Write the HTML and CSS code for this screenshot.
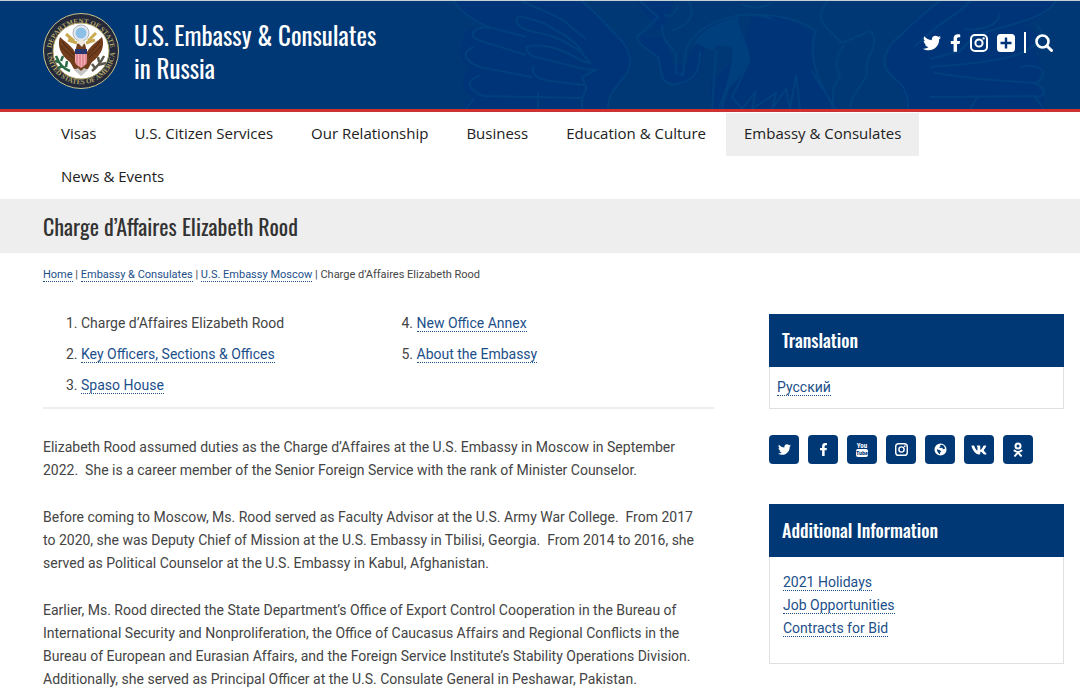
FILE: index.html
```html
<!DOCTYPE html>
<html lang="en">
<head>
  <meta charset="UTF-8">
  <meta name="viewport" content="width=device-width, initial-scale=1.0">
  <title>Charge d’Affaires Elizabeth Rood - U.S. Embassy &amp; Consulates in Russia</title>
  <link rel="stylesheet" href="styles.css">
</head>
<body>
  <!-- Shared icons -->
  <svg class="icon-defs" aria-hidden="true">
    <symbol id="icon-twitter" viewBox="0 0 512 512">
      <path d="M459.37 151.716c.325 4.548.325 9.097.325 13.645 0 138.72-105.583 298.558-298.558 298.558-59.452 0-114.68-17.219-161.137-47.106 8.447.974 16.568 1.299 25.34 1.299 49.055 0 94.213-16.568 130.274-44.832-46.132-.975-84.792-31.188-98.112-72.772 6.498.974 12.995 1.624 19.818 1.624 9.421 0 18.843-1.3 27.614-3.573-48.081-9.747-84.143-51.98-84.143-102.985v-1.299c13.969 7.797 30.214 12.67 47.431 13.319-28.264-18.843-46.781-51.005-46.781-87.391 0-19.492 5.197-37.36 14.294-52.954 51.655 63.675 129.3 105.258 216.365 109.807-1.624-7.797-2.599-15.918-2.599-24.04 0-57.828 46.782-104.934 104.934-104.934 30.213 0 57.502 12.67 76.67 33.137 23.715-4.548 46.456-13.32 66.599-25.34-7.798 24.366-24.366 44.833-46.132 57.827 21.117-2.273 41.584-8.122 60.426-16.243-14.292 20.791-32.161 39.308-52.628 54.253z"/>
    </symbol>
    <symbol id="icon-facebook" viewBox="0 0 320 512">
      <path d="M279.14 288l14.22-92.66h-88.91v-60.13c0-25.35 12.42-50.06 52.24-50.06h40.42V6.26S260.43 0 225.36 0c-73.22 0-121.08 44.38-121.08 124.72v70.62H22.89V288h81.39v224h100.17V288z"/>
    </symbol>
    <symbol id="icon-instagram" viewBox="0 0 18 18">
      <rect x="1" y="1" width="16" height="16" rx="4" fill="none" stroke="currentColor" stroke-width="2"/>
      <circle cx="9" cy="9" r="3.6" fill="none" stroke="currentColor" stroke-width="2"/>
      <circle cx="13.6" cy="4.4" r="1.2"/>
    </symbol>
    <symbol id="icon-plus" viewBox="0 0 18 18">
      <path fill-rule="evenodd" d="M3.500 0h11A3.500 3.500 0 0 1 18 3.500v11a3.500 3.500 0 0 1-3.500 3.500h-11A3.500 3.500 0 0 1 0 14.500v-11A3.500 3.500 0 0 1 3.500 0zM7.800 3.500v4.300H3.500v2.400h4.300v4.300h2.400v-4.300h4.300V7.800h-4.300V3.500z"/>
    </symbol>
    <symbol id="icon-search" viewBox="0 0 18 18">
      <circle cx="7.500" cy="7.500" r="6" fill="none" stroke="currentColor" stroke-width="2.600"/>
      <path d="M12 12l4.500 4.500" stroke="currentColor" stroke-width="3" stroke-linecap="round"/>
    </symbol>
    <symbol id="icon-youtube" viewBox="0 0 14 16">
      <text x="7" y="6" class="tube-text" fill="currentColor">You</text>
      <rect x="1" y="7" width="12" height="8" rx="2"/>
      <text x="7" y="13" class="tube-text tube-text-dark">Tube</text>
    </symbol>
    <symbol id="icon-globe" viewBox="0 0 14 14">
      <path fill-rule="evenodd" d="M7 0.500a6.500 6.500 0 1 1 0 13a6.500 6.500 0 0 1 0-13zM8 1.800L6.400 2.400 7.200 3.600 5.600 4.400 6.400 5.400 8.800 5 10 6.600 11.800 6.200 11.200 3.800 9.800 2.400zM3 6.600L3.600 8.800 5.400 11.600 6.400 12 6.600 10.200 7.800 8.800 5.800 7.600z"/>
    </symbol>
    <symbol id="icon-vk" viewBox="0 0 576 512">
      <path d="M545 117.7c3.700-12.500 0-21.700-17.800-21.700h-58.900c-15 0-21.900 7.900-25.600 16.700 0 0-30 73.100-72.400 120.500-13.700 13.700-20 18.100-27.500 18.100-3.700 0-9.400-4.400-9.400-16.900V117.700c0-15-4.200-21.700-16.600-21.700h-92.600c-9.400 0-15 7-15 13.500 0 14.200 21.200 17.500 23.400 57.500v86.800c0 19-3.400 22.500-10.900 22.500-20 0-68.600-73.400-97.400-157.400-5.800-16.300-11.500-22.900-26.600-22.900H38.800c-16.800 0-20.200 7.900-20.200 16.700 0 15.600 20 93.100 93.100 195.500C160.400 378.100 229 416 291.400 416c37.500 0 42.100-8.400 42.100-22.900 0-66.800-3.400-73.100 15.400-73.100 8.700 0 23.700 4.400 58.700 38.100 40 40 46.600 57.900 69 57.900h58.900c16.800 0 25.300-8.400 20.400-25-11.200-34.900-86.900-106.700-90.300-111.500-8.700-11.200-6.200-16.200 0-26.200.1-.1 72-101.300 79.400-135.600z"/>
    </symbol>
    <symbol id="icon-ok" viewBox="0 0 10 16">
      <g fill="none" stroke="currentColor" stroke-width="2" stroke-linecap="round">
        <circle cx="5" cy="4" r="2.500"/>
        <path d="M1.500 8.600c2 1.700 5 1.700 7 0M5 10.300L2 13.800M5 10.300L8 13.800"/>
      </g>
    </symbol>
  </svg>

  <header class="site-header">
    <svg class="header-art" viewBox="0 0 640 108" aria-hidden="true">
      <g class="art-feathers">
        <path d="M14 0C22 15 36 22 50 25C34 24 22 30 24 39C18 47 18 60 32 67C18 75 20 88 34 97C26 98 24 103 26 108H168C166 92 180 86 190 70C198 52 188 42 170 27C160 16 150 6 142 0Z"/>
        <path d="M500 0C480 10 462 28 450 48C438 70 466 80 467 108H602C610 94 596 82 594 82C608 70 600 62 594 48C602 34 596 24 582 26C600 18 612 6 616 0Z"/>
        <path d="M198 36L224 26L234 0H196L216 26L198 36L200 44L218 58L222 78L240 84L258 76L264 48L260 36L244 66L232 60L226 36Z"/>
        <path d="M312 16L300 52L270 84L272 108H400L374 70L372 30L340 14Z"/>
      </g>
      <path class="art-shade" d="M254 42C262 28 280 20 298 16C300 34 308 42 310 56C304 68 302 76 290 86C282 104 280 106 278 108C286 84 294 68 292 46L276 44L274 50Z"/>
      <g class="art-lines">
        <path d="M14 0C24 16 44 26 64 30L86 36M142 0C158 14 168 26 178 36C192 50 194 64 184 76C174 88 168 94 168 108"/>
        <path d="M79 15C72 22 80 29 100 32C120 36 132 44 142 52L150 62L142 60C120 46 100 42 86 46C88 58 100 56 120 62L144 68L156 69L142 76L146 87L142 98V108"/>
        <path d="M50 27C30 24 30 38 38 39L86 54M34 46C16 52 30 66 50 68L92 76M94 65C90 72 96 78 110 80L144 84M40 75C24 78 28 90 44 95L142 97M34 97L26 108M98 92L98 108"/>
        <path d="M79 15L104 22C112 28 130 34 142 50M82 0C100 10 122 15 130 25L146 38"/>
        <path d="M200 0L218 16L206 28L197 36C198 44 210 50 218 56C222 66 218 80 232 84C250 80 260 78 260 50M222 24C222 36 226 42 236 52V72L243 74L246 48C252 36 262 26 278 20C300 12 316 12 332 18M248 0C254 8 252 18 244 24L232 30M226 12C222 16 234 18 238 4"/>
        <path d="M276 50L272 108M296 50L282 108M310 58C304 72 298 84 292 96L302 108L316 90L312 108L336 92L332 108L346 88L350 108L356 74L360 108M302 3C314 9 324 7 332 2"/>
        <path d="M310 14C338 12 362 20 376 30C368 52 374 76 396 108M372 70C378 82 386 90 392 104M388 0C380 8 378 18 386 26L402 42L430 30M404 44C390 64 400 72 400 76C388 90 396 96 392 108M430 30C440 40 430 50 426 66C432 78 410 90 410 108"/>
        <path d="M500 0C480 14 466 30 452 42C438 62 444 70 460 82C468 92 468 100 468 108M530 0C520 14 500 20 490 32L474 46M616 0C608 12 592 18 574 23L536 34L520 50L490 58M560 12C558 26 540 30 524 28M596 24C612 36 590 50 570 56C544 62 520 64 490 66"/>
        <path d="M580 66C612 60 604 82 594 82L540 78L494 72M594 82C612 90 602 98 594 95L490 96M594 95L604 108M538 96C530 104 532 108 530 108"/>
      </g>
    </svg>

    <a class="brand" href="#">
      <svg class="seal" viewBox="0 0 76 76" role="img" aria-label="U.S. Department of State seal">
        <defs>
          <path id="ring-top" d="M9 48A30 30 0 1 1 67 48"/>
          <path id="ring-bottom" d="M5 29A34 34 0 1 0 71 29"/>
        </defs>
        <circle cx="38" cy="38" r="37.500" fill="#23293a" stroke="#c9c48c"/>
        <circle cx="38" cy="38" r="28" fill="#fff" stroke="#b9ac6e"/>
        <text class="seal-text"><textPath href="#ring-top" startOffset="50%">DEPARTMENT OF STATE</textPath></text>
        <text class="seal-text"><textPath href="#ring-bottom" startOffset="50%">UNITED STATES OF AMERICA</textPath></text>
        <path d="M23 21l8 7M53 20l-8 8M25 27l9 3M52 27l-9 3" stroke="#c9a94f" stroke-width="3"/>
        <circle cx="38" cy="20" r="8" fill="#e5e9ee" stroke="#a9b3bb"/>
        <circle cx="38" cy="20" r="5.500" fill="#8dc0e6"/>
        <path d="M17 24c-3 8 0 18 10 25l4 7 7 2 7-2 4-7c10-7 13-17 10-25-5 5-11 8-15 15l-2-8-4-2-4 2-2 8c-4-7-10-10-15-15z" fill="#713d1d"/>
        <path d="M19 28c3 6 8 8 12 14M18 33c4 6 8 7 12 12M57 28c-3 6-8 8-12 14M58 33c-4 6-8 7-12 12" stroke="#4d2612" fill="none"/>
        <path d="M34 29c2-3 6-3 8 0l-3 5z" fill="#eee9dd"/>
        <path d="M32 36h12v12c0 4-4 5-6 7-2-2-6-3-6-7z" fill="#f2b0b4"/>
        <path d="M34 41v11M37 41v13M40 41v13M43 41v10" stroke="#d0677a"/>
        <path d="M32 36h12v5H32z" fill="#27366f"/>
        <path d="M31 57l4-2 3 3 3-3 4 2-7 6z" fill="#c6c6c6"/>
        <path d="M27 58c-6-2-11-7-14-15M16 49l-4-1M20 53l-5 2M18 48l2-5M23 54l1-6" stroke="#2d6b45" stroke-width="2.500" fill="none"/>
        <path d="M49 58c5-4 9-9 12-15M52 55l-3-4M55 52l8-2M56 49l-1-5" stroke="#5c584c" stroke-width="2.500" fill="none"/>
      </svg>
      <span class="brand-name">U.S. Embassy &amp; Consulates<br>in Russia</span>
    </a>

    <div class="header-tools">
      <a href="#" aria-label="Twitter"><svg class="tool-icon"><use href="#icon-twitter"/></svg></a>
      <a href="#" aria-label="Facebook"><svg class="tool-icon narrow"><use href="#icon-facebook"/></svg></a>
      <a href="#" aria-label="Instagram"><svg class="tool-icon"><use href="#icon-instagram"/></svg></a>
      <a href="#" aria-label="More networks"><svg class="tool-icon"><use href="#icon-plus"/></svg></a>
      <span class="tool-divider"></span>
      <button type="button" aria-label="Search"><svg class="tool-icon"><use href="#icon-search"/></svg></button>
    </div>
  </header>

  <nav class="main-nav">
    <a href="#">Visas</a>
    <a href="#">U.S. Citizen Services</a>
    <a href="#">Our Relationship</a>
    <a href="#">Business</a>
    <a href="#">Education &amp; Culture</a>
    <a href="#" class="active">Embassy &amp; Consulates</a>
    <a href="#">News &amp; Events</a>
  </nav>

  <div class="page-title">
    <h1>Charge d’Affaires Elizabeth Rood</h1>
  </div>

  <div class="breadcrumbs">
    <a href="#">Home</a> | <a href="#">Embassy &amp; Consulates</a> | <a href="#">U.S. Embassy Moscow</a> | Charge d’Affaires Elizabeth Rood
  </div>

  <div class="container">
    <main class="main-content">
      <ol class="page-list">
        <li>Charge d’Affaires Elizabeth Rood</li>
        <li><a href="#">Key Officers, Sections &amp; Offices</a></li>
        <li><a href="#">Spaso House</a></li>
        <li><a href="#">New Office Annex</a></li>
        <li><a href="#">About the Embassy</a></li>
      </ol>

      <p>Elizabeth Rood assumed duties as the Charge d’Affaires at the U.S. Embassy in Moscow in September 2022.&nbsp; She is a career member of the Senior Foreign Service with the rank of Minister Counselor.</p>
      <p>Before coming to Moscow, Ms. Rood served as Faculty Advisor at the U.S. Army War College.&nbsp; From 2017 to&nbsp;2020, she was Deputy Chief of Mission at the U.S. Embassy in Tbilisi, Georgia.&nbsp; From 2014 to 2016, she served as Political Counselor at the U.S. Embassy in Kabul, Afghanistan.</p>
      <p>Earlier, Ms. Rood directed the State Department’s Office of Export Control Cooperation in the Bureau of International Security and Nonproliferation, the Office of Caucasus Affairs and Regional Conflicts in the Bureau of European and Eurasian Affairs, and the Foreign Service Institute’s Stability Operations Division. Additionally, she served as Principal Officer at the U.S. Consulate General in Peshawar, Pakistan.</p>
    </main>

    <aside class="sidebar">
      <section class="widget">
        <h2>Translation</h2>
        <div class="widget-body language"><a href="#" lang="ru">Русский</a></div>
      </section>

      <div class="social-links">
        <a href="#" aria-label="Twitter"><svg><use href="#icon-twitter"/></svg></a>
        <a href="#" aria-label="Facebook"><svg><use href="#icon-facebook"/></svg></a>
        <a href="#" aria-label="YouTube"><svg class="tall"><use href="#icon-youtube"/></svg></a>
        <a href="#" aria-label="Instagram"><svg><use href="#icon-instagram"/></svg></a>
        <a href="#" aria-label="Website"><svg><use href="#icon-globe"/></svg></a>
        <a href="#" aria-label="VK"><svg class="tall"><use href="#icon-vk"/></svg></a>
        <a href="#" aria-label="Odnoklassniki"><svg class="tall"><use href="#icon-ok"/></svg></a>
      </div>

      <section class="widget">
        <h2>Additional Information</h2>
        <ul class="widget-body link-list">
          <li><a href="#">2021 Holidays</a></li>
          <li><a href="#">Job Opportunities</a></li>
          <li><a href="#">Contracts for Bid</a></li>
        </ul>
      </section>
    </aside>
  </div>
</body>
</html>
```
FILE: styles.css
```css
:root {
  --navy: #003875;
  --red: #cf3030;
  --grey: #eeeeee;
  --link: #1b4f8a;
  --text: #444444;
  --gutter: 43px;
}

* {
  margin: 0;
  padding: 0;
  box-sizing: border-box;
}

body {
  font-family: Roboto, "Liberation Sans", sans-serif;
  font-size: 14px;
  line-height: 23px;
  color: var(--text);
  background-color: #fff;
}

a {
  color: var(--link);
  text-decoration: none;
}

h1, h2, .brand-name {
  font-family: Oswald, "Roboto Condensed", sans-serif;
  font-weight: 400;
}

.icon-defs {
  display: none;
}

/* Header */
.site-header {
  position: relative;
  display: flex;
  justify-content: space-between;
  align-items: flex-start;
  min-height: 112px;
  padding: 12px 27px 16px var(--gutter);
  background-color: var(--navy);
  border-top: 1px solid #c5d0d6;
  border-bottom: 3px solid var(--red);
  overflow: hidden;
}

.header-art {
  position: absolute;
  top: 0;
  right: 0;
  width: 640px;
  height: 108px;
}

.art-feathers {
  fill: #003478;
}

.art-shade {
  fill: #003f7d;
}

.art-lines {
  fill: none;
  stroke: #00407d;
  stroke-width: 2;
}

.brand {
  position: relative;
  display: flex;
  gap: 15px;
  color: #fff;
}

.seal {
  width: 76px;
  height: 76px;
}

.seal-text {
  font-family: "Liberation Serif", serif;
  font-size: 7px;
  font-weight: 700;
  fill: #b3a568;
  text-anchor: middle;
}

.brand-name {
  padding-top: 5px;
  font-size: 25px;
  line-height: 33px;
}

.header-tools {
  position: relative;
  display: flex;
  align-items: center;
  gap: 9px;
  padding-top: 19px;
  color: #fff;
}

.header-tools a,
.header-tools button {
  display: flex;
  color: #fff;
  background: none;
  border: 0;
}

.tool-icon {
  width: 18px;
  height: 18px;
  fill: currentColor;
}

.tool-icon.narrow {
  width: 11px;
}

.tool-divider {
  width: 2px;
  height: 21px;
  background-color: #fff;
}

/* Navigation */
.main-nav {
  display: flex;
  flex-wrap: wrap;
  column-gap: 2px;
  padding: 1px 27px 0 var(--gutter);
  font-family: "Open Sans", "Noto Sans", sans-serif;
  font-size: 15px;
}

.main-nav a {
  padding: 9px 18px 11px;
  color: #212121;
}

.main-nav .active {
  background-color: var(--grey);
}

/* Title bar */
.page-title {
  padding: 11px var(--gutter);
  background-color: var(--grey);
}

.page-title h1 {
  font-size: 22px;
  line-height: 32px;
  color: #333;
}

.breadcrumbs {
  padding: 12px var(--gutter) 8px;
  font-size: 11px;
  line-height: 20px;
}

.breadcrumbs a,
.page-list a,
.widget-body a {
  border-bottom: 1px dotted var(--link);
}

/* Content */
.container {
  display: flex;
  gap: 55px;
  padding: 21px 16px 0 var(--gutter);
}

.main-content {
  flex: 1;
}

.page-list {
  display: grid;
  grid-template-columns: 1fr 1fr;
  grid-template-rows: repeat(3, 31px);
  grid-auto-flow: column;
  margin-bottom: 27px;
  line-height: 19px;
  border-bottom: 2px solid var(--grey);
}

.page-list li {
  margin-left: 38px;
}

.main-content p {
  margin-bottom: 24px;
}

/* Sidebar */
.sidebar {
  width: 295px;
}

.widget h2 {
  padding: 10px 13px;
  font-size: 18px;
  font-weight: 500;
  line-height: 33px;
  color: #fff;
  background-color: var(--navy);
}

.widget-body {
  border: 1px solid #e0e0e0;
  border-top: 0;
}

.language {
  padding: 9px 7px;
}

.link-list {
  padding: 14px 13px 23px;
  list-style: none;
}

.social-links {
  display: flex;
  gap: 9px;
  padding: 26px 0 40px;
}

.social-links a {
  display: flex;
  align-items: center;
  justify-content: center;
  width: 30px;
  height: 29px;
  color: #fff;
  background-color: var(--navy);
  border-radius: 4px;
}

.social-links svg {
  width: 13px;
  height: 13px;
  fill: currentColor;
}

.social-links .tall {
  width: 16px;
  height: 16px;
}

.tube-text {
  font-family: "Roboto Condensed", Roboto, sans-serif;
  font-size: 7px;
  font-weight: 700;
  text-anchor: middle;
}

.tube-text-dark {
  font-size: 6px;
  fill: var(--navy);
}
```
